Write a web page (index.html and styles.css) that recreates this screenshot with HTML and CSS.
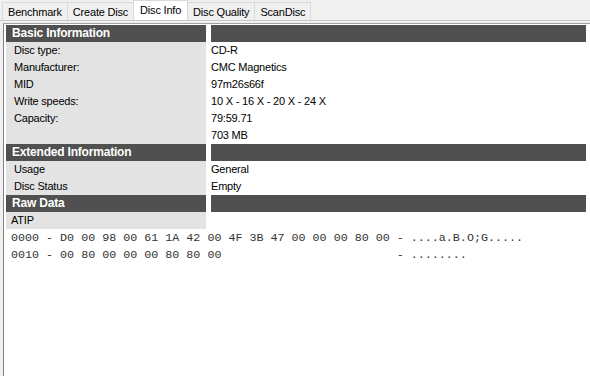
FILE: index.html
```html
<!DOCTYPE html>
<html lang="en">
<head>
  <meta charset="UTF-8" />
  <title>Disc Info</title>
  <link rel="stylesheet" href="styles.css">
</head>
<body>

  <div class="tabs">
    <div class="tab">Benchmark</div>
    <div class="tab">Create Disc</div>
    <div class="tab active">Disc Info</div>
    <div class="tab">Disc Quality</div>
    <div class="tab">ScanDisc</div>
  </div>

  <div class="page">
    <div class="list">
      <div class="grid">
        <div class="head">Basic Information</div>
        <div class="head"></div>

        <div class="key">Disc type:</div>
        <div class="val">CD-R</div>
        <div class="key">Manufacturer:</div>
        <div class="val">CMC Magnetics</div>
        <div class="key">MID</div>
        <div class="val">97m26s66f</div>
        <div class="key">Write speeds:</div>
        <div class="val">10 X - 16 X - 20 X - 24 X</div>
        <div class="key">Capacity:</div>
        <div class="val">79:59.71</div>
        <div class="key"></div>
        <div class="val">703 MB</div>

        <div class="head">Extended Information</div>
        <div class="head"></div>

        <div class="key">Usage</div>
        <div class="val">General</div>
        <div class="key">Disc Status</div>
        <div class="val">Empty</div>

        <div class="head">Raw Data</div>
        <div class="head"></div>

        <div class="key atip">ATIP</div>
        <div class="val"></div>
      </div>

<pre class="hex">0000 - D0 00 98 00 61 1A 42 00 4F 3B 47 00 00 00 80 00 - ....a.B.O;G.....
0010 - 00 80 00 00 00 80 80 00                         - ........</pre>
    </div>
  </div>

</body>
</html>
```

FILE: styles.css
```css
* { box-sizing: border-box; }

body {
  margin: 0;
  background: #f0f0f0;
  font-family: 'Liberation Sans', Arial, sans-serif;
  font-size: 11px;
  letter-spacing: -0.2px;
  color: #000;
}

.tabs {
  display: flex;
  align-items: flex-end;
  height: 21px;
  padding-left: 2px;
  border-bottom: 1px solid #c8c8c8;
}

.tab {
  height: 18px;
  line-height: 18px;
  padding: 0 5px;
  border: 1px solid #d9d9d9;
  border-bottom: none;
  border-right: none;
  background: #f0f0f0;
}

.tab:last-child {
  border-right: 1px solid #d9d9d9;
}

.tab.active {
  height: 20px;
  line-height: 19px;
  padding: 0 6px;
  background: #fff;
  border-right: 1px solid #d9d9d9;
}

.tab.active + .tab {
  border-left: none;
}

.page {
  padding: 2px 0 0 3px;
  height: 355px;
}

.list {
  height: 100%;
  background: #fff;
  border-top: 1px solid #a0a0a0;
  border-left: 1px solid #828282;
  padding: 1px 0 0 2px;
}

.grid {
  display: grid;
  grid-template-columns: 200px 375px;
  column-gap: 5px;
}

.grid > div {
  height: 17px;
  line-height: 17px;
  white-space: nowrap;
}

.head {
  background: #505050;
  color: #fff;
  font-weight: bold;
  font-size: 12px;
  padding-left: 6px;
}

.key {
  background: #e3e3e3;
  padding-left: 8px;
}

.key.atip {
  padding-left: 5px;
}

.hex {
  margin: 1px 0 0 5px;
  font-family: 'Liberation Mono', 'Courier New', monospace;
  font-size: 11.7px;
  letter-spacing: 0;
  line-height: 17px;
  color: #333;
}
```
